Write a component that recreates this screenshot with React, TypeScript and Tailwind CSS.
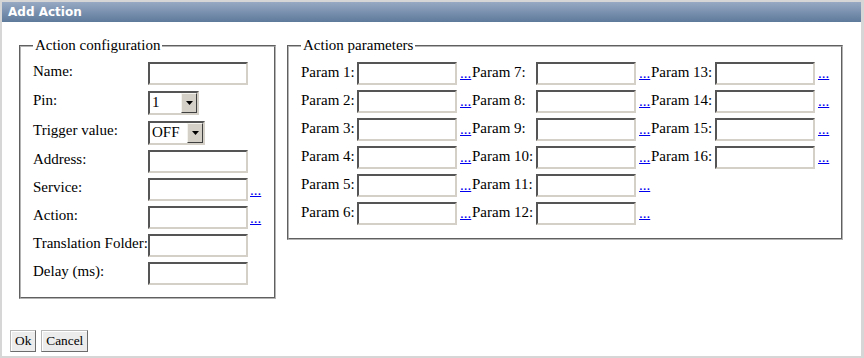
import React from 'react'

function TextBox() {
  return (
    <div className="h-[23px] w-[100px] border-2 border-t-[#555555] border-l-[#555555] border-b-[#d4d0c8] border-r-[#d4d0c8] bg-white" />
  )
}

function SelectBox({ value, width }: { value: string; width: string }) {
  return (
    <div
      className={`flex h-[24px] items-stretch border-2 border-t-[#555555] border-l-[#555555] border-b-[#d4d0c8] border-r-[#d4d0c8] bg-white ${width}`}
    >
      <span className="flex-1 pl-[2px] font-['Liberation_Serif',serif] text-[15px] leading-[19px] text-black">{value}</span>
      <span className="flex w-[16px] items-center justify-center border border-t-[#f4f3ee] border-l-[#f4f3ee] border-b-[#404040] border-r-[#404040] bg-[#d4d0c8]">
        <svg width="7" height="4" viewBox="0 0 7 4">
          <path d="M0 0h7L3.5 4z" fill="#000" />
        </svg>
      </span>
    </div>
  )
}

function More() {
  return (
    <a className="font-['Liberation_Serif',serif] text-[15px] leading-[17px] text-[#0000ee] underline">...</a>
  )
}

const CONFIG_ROWS: { label: string; kind: 'text' | 'pin' | 'trigger'; more?: boolean; h: string }[] = [
  { label: 'Name:', kind: 'text', h: 'h-[29px]' },
  { label: 'Pin:', kind: 'pin', h: 'h-[30px]' },
  { label: 'Trigger value:', kind: 'trigger', h: 'h-[29px]' },
  { label: 'Address:', kind: 'text', h: 'h-[28px]' },
  { label: 'Service:', kind: 'text', more: true, h: 'h-[28px]' },
  { label: 'Action:', kind: 'text', more: true, h: 'h-[28px]' },
  { label: 'Translation Folder:', kind: 'text', h: 'h-[28px]' },
  { label: 'Delay (ms):', kind: 'text', h: 'h-[28px]' },
]

const PARAM_ROWS = [
  [1, 7, 13],
  [2, 8, 14],
  [3, 9, 15],
  [4, 10, 16],
  [5, 11, null],
  [6, 12, null],
]

export default function App() {
  return (
    <div className="flex h-[358px] w-[864px] flex-col bg-[#d6d6d6] pt-[2px] pl-[2px] pr-[3px] pb-[2px] font-['Liberation_Serif',serif] text-black">
      <div className="flex h-[20px] shrink-0 items-center bg-linear-to-b from-[#97a9c3] to-[#5e7a9b] pl-[6px] font-['DejaVu_Sans',Verdana,sans-serif] text-[12px] font-bold text-white">
        Add Action
      </div>
      <div className="flex flex-1 flex-col bg-white">
        <div className="ml-[17px] mt-[15px] flex items-start gap-[11px]">
          <fieldset className="w-[257px] border-2 border-[#b4b4b4] [border-style:groove] px-[12px] pt-[8px] pb-[7px]">
            <legend className="px-[2px] font-['Liberation_Serif',serif] text-[15px] leading-[17px]">Action configuration</legend>
            <div className="flex flex-col">
              {CONFIG_ROWS.map((row) => (
                <div key={row.label} className={`grid grid-cols-[115px_102px_12px] items-start ${row.h}`}>
                  <span className="whitespace-nowrap pt-[1px] font-['Liberation_Serif',serif] text-[15px] leading-[17px]">
                    {row.label}
                  </span>
                  {row.kind === 'text' && <TextBox />}
                  {row.kind === 'pin' && <SelectBox value="1" width="w-[51px]" />}
                  {row.kind === 'trigger' && <SelectBox value="OFF" width="w-[57px]" />}
                  {row.more ? (
                    <span className="pt-[3px] leading-[17px]">
                      <More />
                    </span>
                  ) : (
                    <span />
                  )}
                </div>
              ))}
            </div>
          </fieldset>

          <fieldset className="w-[556px] border-2 border-[#b4b4b4] [border-style:groove] pl-[12px] pr-[11px] pt-[8px] pb-[8px]">
            <legend className="px-[2px] font-['Liberation_Serif',serif] text-[15px] leading-[17px]">Action parameters</legend>
            <div className="flex flex-col">
              {PARAM_ROWS.map((row, i) => (
                <div
                  key={i}
                  className="grid h-[28px] grid-cols-[56px_103px_12px_64px_103px_12px_64px_103px_12px] items-start"
                >
                  {row.map((n, j) =>
                    n === null ? (
                      <React.Fragment key={j}>
                        <span />
                        <span />
                        <span />
                      </React.Fragment>
                    ) : (
                      <React.Fragment key={j}>
                        <span className="whitespace-nowrap pt-[2px] font-['Liberation_Serif',serif] text-[15px] leading-[17px]">
                          Param {n}:
                        </span>
                        <TextBox />
                        <span className="pt-[2px] leading-[17px]">
                          <More />
                        </span>
                      </React.Fragment>
                    ),
                  )}
                </div>
              ))}
            </div>
          </fieldset>
        </div>

        <div className="mt-auto mb-[4px] ml-[8px] flex gap-[5px]">
          <button
            type="button"
            className="h-[22px] border border-[#b8b8b8] border-b-[#6c6c6c] border-r-[#6c6c6c] bg-[#ececec] px-[4px] font-['Liberation_Serif',serif] text-[13.33px] leading-[18px] shadow-[inset_1px_1px_0_#ffffff]"
          >
            Ok
          </button>
          <button
            type="button"
            className="h-[22px] border border-[#b8b8b8] border-b-[#6c6c6c] border-r-[#6c6c6c] bg-[#ececec] px-[4px] font-['Liberation_Serif',serif] text-[13.33px] leading-[18px] shadow-[inset_1px_1px_0_#ffffff]"
          >
            Cancel
          </button>
        </div>
      </div>
    </div>
  )
}
